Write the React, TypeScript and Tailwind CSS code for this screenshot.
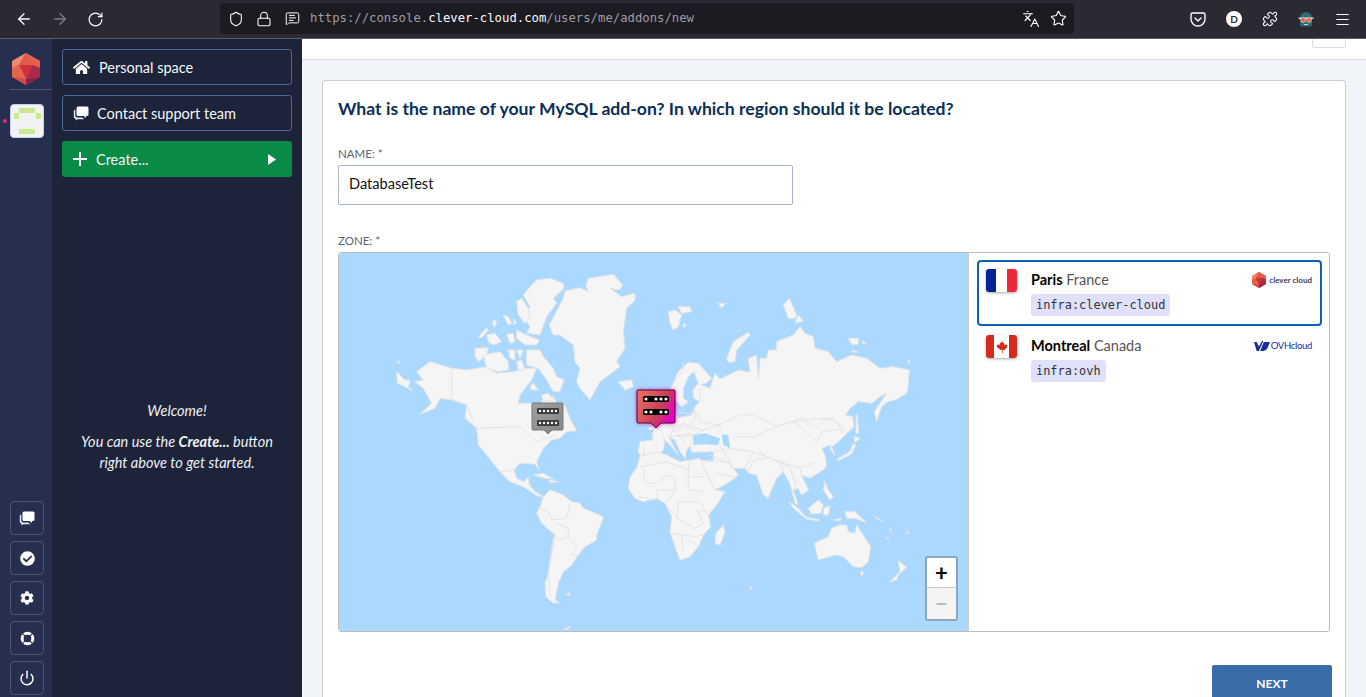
import { ArrowLeft, ArrowRight, Languages, Lock, Menu, MessageSquareText, Power, Puzzle, RotateCw, Shield, Star } from 'lucide-react'
import { FaCheckCircle, FaCog, FaHome } from 'react-icons/fa'

const sans = 'font-["Lato","Noto_Sans",sans-serif]'

// land shapes, traced at 3x from the origin of each group
const northLand = [
  '230,350 270,320 335,340 380,345 440,335 470,355 520,350 560,340 590,340 575,375 540,420 535,445 575,445 605,450 610,420 640,425 650,445 675,450 690,490 710,528 680,530 660,550 635,555 610,580 590,620 598,647 585,627 540,625 522,645 530,670 552,680 565,667 568,690 585,710 610,725 592,723 550,695 510,680 480,650 440,600 415,570 410,520 375,490 380,450 340,435 300,430 285,460 240,478 275,445 250,400 225,380 250,375',
  '170,350 195,375 210,375 205,395 218,408 195,395 172,385',
  '170,318 180,320 178,325',
  '590,75 630,70 670,85 672,100 640,130 650,145 620,185 600,240 560,235 570,215 555,190 570,155 550,120 575,90',
  '530,140 545,130 565,160 570,190 555,205 535,180',
  '490,180 505,185 515,205 505,210',
  '520,190 530,205 520,208',
  '460,195 470,200 465,215 458,212',
  '415,245 440,218 445,225 425,248',
  '440,240 465,235 485,260 460,270 445,260',
  '500,238 520,235 525,260 510,265',
  '530,225 560,240 598,255 590,270 555,270 530,250',
  '405,280 445,278 440,300 415,320 405,305',
  '430,300 480,290 505,320 505,345 475,350 440,340',
  '505,285 525,285 525,315 510,310',
  '530,285 550,285 540,310',
  '560,285 600,285 610,305 640,340 650,365 672,375 660,410 640,410 620,375 595,340 560,330',
  '530,320 545,315 555,345 535,345',
  '570,395 580,385 595,405 575,405',
  '605,420 625,415 640,435 610,440',
  // greenland
  '745,70 820,58 848,90 838,105 810,100 845,125 885,115 885,135 860,160 850,230 855,280 830,320 840,335 780,380 750,435 720,400 710,380 720,340 705,320 700,270 660,240 640,240 628,210 670,130 675,108 720,98 745,110 738,92',
  '835,380 875,375 880,395 855,405',
]

const eurasia = [
  '55,590 60,560 100,555 95,530 85,520 100,510 135,490 165,490 165,470 175,488 215,480 225,455 240,440 222,430 218,405 235,385 222,350 205,365 190,400 190,430 205,440 185,455 170,440 150,440 150,405 175,350 205,322 235,325 275,370 258,385 240,388 270,400 285,355 300,372 355,345 390,352 385,310 410,300 415,375 420,310 440,310 445,285 470,285 470,260 520,240 540,215 555,235 580,245 585,280 625,290 650,320 695,300 740,310 780,340 820,335 868,345 865,390 860,415 830,433 800,442 785,455 770,500 763,470 780,445 800,415 780,425 755,445 715,440 690,460 677,480 698,485 702,515 670,545 655,560 630,580 645,603 640,585 630,570 605,580 615,600 620,630 610,645 570,669 545,660 565,705 545,720 535,700 520,705 535,750 525,745 510,685 490,650 470,670 445,727 430,720 410,660 388,655 375,640 340,640 330,625 355,660 330,680 285,705 260,660 240,615 280,620 280,590 215,592 210,572 200,585 195,610 180,590 165,555 145,545 170,590 175,600 150,570 135,555 130,585 100,615 70,615',
  '340,260 385,232 390,240 350,285 345,320 325,322 320,310',
  '145,170 165,165 185,180 175,215 160,225 150,205',
  '175,155 210,155 215,170 185,175',
  '190,205 200,210 190,218',
  '295,145 318,145 305,160',
  '490,150 508,130 530,180 525,190 505,190',
  '525,205 535,180 550,198',
  '685,250 715,250 715,268 695,268',
  '725,258 740,265 728,266',
  '697,285 715,292 700,292',
  '862,320 868,315 868,325',
  '708,480 712,480 716,535 708,535',
  '702,545 720,550 705,563',
  '700,565 690,590 655,610 652,618 695,597 707,570',
  '60,480 80,470 90,505 60,505',
]

const seas = [
  '220,540 255,535 300,550 295,570 255,568 220,570',
  '305,538 325,540 330,580 310,570',
  '90,530 98,520 102,535',
]

const southLand = [
  // africa
  '390,110 410,85 420,50 470,35 500,45 540,65 570,60 600,55 620,100 645,150 675,155 650,195 625,225 632,260 610,285 595,320 570,350 540,360 525,320 510,275 515,230 495,190 470,175 430,185 405,175 385,145',
  '645,310 648,280 670,255 675,275 660,315',
  // south america
  '130,170 150,150 190,165 215,185 240,190 250,205 305,228 310,235 290,285 290,300 255,320 235,345 225,360 215,375 190,395 175,430 165,480 180,488 160,490 138,470 135,430 145,400 155,340 165,285 125,250 110,220 120,200',
  '100,105 130,100 160,118 135,115',
  '145,120 178,125 150,128',
  '198,463 212,460 205,468',
  '188,570 212,558 205,566',
  // south east asia
  '868,185 895,205 925,240 905,225 880,205',
  '915,230 960,240 950,243 915,235',
  '925,205 955,180 970,195 962,220 935,222',
  '970,205 990,198 985,225 970,225',
  '975,125 985,150 1000,170 990,180 970,150',
  '1000,240 1025,235 1020,242',
  '1035,215 1065,215 1100,248 1065,235 1040,235',
  // australia
  '943,310 985,290 995,265 1020,255 1040,255 1045,275 1065,280 1070,255 1112,320 1105,365 1085,383 1060,380 1030,350 1005,345 955,360',
  '1080,395 1090,395 1087,410',
  '1195,362 1220,382 1200,400',
  '1170,425 1200,395 1190,420',
  '1125,230 1150,245 1128,235',
  '1170,265 1175,275 1170,272',
  '1160,292 1168,298 1162,298',
  '1218,275 1228,278 1220,280',
  '750,440 758,448 752,448',
  '798,168 807,172 803,178',
]

const borders = {
  north: ['335,340 335,435 380,450 410,520 540,515 590,560 650,540', '480,650 520,645 522,645'],
  east: [
    '300,510 360,480 400,480 470,515 520,500 600,490 650,500 670,535',
    '340,545 400,545 470,515',
    '480,510 520,500 540,515 590,560 605,530 640,525 675,525',
    '520,500 540,490 590,518 610,490 640,490 675,525',
    '100,510 125,530 135,555',
    '135,490 160,520 205,510 225,495 225,455',
    '160,520 150,545',
    '205,510 250,525 220,540',
    '170,545 220,540 210,570',
    '250,525 300,510',
    '300,570 340,640',
    '280,590 330,580',
    '375,640 400,590 480,620 490,650',
    '400,590 330,580',
    '270,600 330,625',
    '480,620 540,640 545,660',
    '540,640 590,620',
    '70,570 75,612',
    '240,400 240,430 245,440',
    '190,320 190,345 150,400',
    '140,520 195,505 205,520 230,525',
    '170,470 200,475 235,475 240,500',
    '240,500 300,510 300,530',
    '145,545 185,540 215,535',
    '185,540 195,570',
    '155,530 185,525',
  ],
  south: [
    '420,80 500,65 565,90 570,60',
    '570,110 612,110',
    '565,90 565,150 610,155',
    '430,85 435,130 470,130 500,105 525,110 525,150 500,190',
    '470,150 530,150',
    '415,170 470,180 470,150',
    '530,185 600,185 620,220',
    '535,190 530,235 585,265 610,250 590,210 620,215',
    '510,280 545,285 550,330',
    '545,285 590,290 610,285',
    '565,300 600,320',
    '500,200 520,220',
    '145,215 155,240 200,235 210,190',
    '115,205 145,215',
    '165,250 205,265 205,290 230,320 215,345 235,345',
    '165,285 175,300 205,290',
    '160,290 145,400 150,470',
    '820,60 870,80 880,115 905,135',
    '880,115 890,150',
    '745,100 760,60 800,55 780,30',
    '625,60 670,65 690,70',
    '650,100 700,110',
  ],
}

function Land({ x, y, shapes, lines = [] }: { x: number; y: number; shapes: string[]; lines?: string[] }) {
  return (
    <g transform={`translate(${x} ${y}) scale(0.3333)`} fill="#f5f5f5" stroke="#e4e4e4" strokeWidth="3" strokeLinejoin="round">
      {shapes.map((p) => (
        <polygon key={p} points={p} />
      ))}
      {lines.map((p) => (
        <polyline key={p} points={p} fill="none" />
      ))}
    </g>
  )
}

function WorldMap() {
  return (
    <svg viewBox="339 253 629 378" className="h-full w-full">
      <defs>
        <linearGradient id="pin" x1="0" y1="0" x2="1" y2="0.5">
          <stop offset="0" stopColor="#ea7560" />
          <stop offset="0.68" stopColor="#c93f58" />
          <stop offset="1" stopColor="#e800c8" />
        </linearGradient>
        <linearGradient id="grayPin" x1="0" y1="0" x2="1" y2="1">
          <stop offset="0" stopColor="#a0a0a0" />
          <stop offset="1" stopColor="#868686" />
        </linearGradient>
        <filter id="glow" x="-30%" y="-30%" width="160%" height="160%">
          <feGaussianBlur stdDeviation="2" />
        </filter>
      </defs>
      <rect x="339" y="253" width="629" height="378" fill="#aad8ff" />
      <Land x={340} y={255} shapes={northLand} lines={borders.north} />
      <Land x={620} y={255} shapes={eurasia} lines={borders.east} />
      <g transform="translate(620 255) scale(0.3333)" fill="#aad8ff">
        {seas.map((p) => (
          <polygon key={p} points={p} />
        ))}
      </g>
      <Land x={500} y={440} shapes={southLand} lines={borders.south} />

      {/* gray pin */}
      <path d="M533 403h29a1 1 0 0 1 1 1v25a1 1 0 0 1-1 1h-10l-4 4-4-4h-11a1 1 0 0 1-1-1v-25a1 1 0 0 1 1-1z" fill="url(#grayPin)" stroke="#777" />
      <rect x="537" y="408" width="22" height="6" rx="1" fill="#3c3c3c" />
      <rect x="537" y="420" width="22" height="6" rx="1" fill="#3c3c3c" />
      {[540, 544, 548, 552, 556].map((c) => (
        <g key={c}>
          <circle cx={c} cy="411" r="1.200" fill="#fff" />
          <circle cx={c} cy="423" r="1.200" fill="#fff" />
        </g>
      ))}

      {/* selected pin */}
      <path d="M638 390h36a1 1 0 0 1 1 1v31a1 1 0 0 1-1 1h-13l-5 5-5-5h-13a1 1 0 0 1-1-1v-31a1 1 0 0 1 1-1z" fill="#e000d0" filter="url(#glow)" />
      <path d="M638 390h36a1 1 0 0 1 1 1v31a1 1 0 0 1-1 1h-13l-5 5-5-5h-13a1 1 0 0 1-1-1v-31a1 1 0 0 1 1-1z" fill="url(#pin)" stroke="#4c1024" />
      <rect x="643" y="396" width="26" height="6" rx="1.500" fill="#000" />
      <rect x="643" y="409" width="26" height="6" rx="1.500" fill="#000" />
      {[646, 656, 661, 666].map((c) => (
        <circle key={c} cx={c} cy="399" r="1.600" fill="#fff" />
      ))}
      {[646, 651, 661, 666].map((c) => (
        <circle key={c} cx={c} cy="412" r="1.600" fill="#fff" />
      ))}
    </svg>
  )
}

function ChatIcon({ size = 16 }: { size?: number }) {
  return (
    <svg viewBox="0 0 16 16" width={size} height={size} fill="#fff">
      <path d="M5 1.500h9a1.500 1.500 0 0 1 1.500 1.500v6.500A1.500 1.500 0 0 1 14 11h-1v2l-2.500-2H5A1.500 1.500 0 0 1 3.500 9.500V3A1.500 1.500 0 0 1 5 1.500z" />
      <path d="M2.300 4.500v6A2 2 0 0 0 4.300 12.500h5l2 1.800H4.500l-2 1v-1.500A2.300 2.300 0 0 1 .8 11.500V6a1.800 1.800 0 0 1 1.500-1.500z" fill="#dbe6ff" />
    </svg>
  )
}

function LifeRing() {
  return (
    <svg viewBox="0 0 16 16" width="15" height="15" fill="none">
      <circle cx="8" cy="8" r="5.700" stroke="#fff" strokeWidth="3.200" />
      <path d="M2.300 2.300l3.400 3.400M13.700 2.300l-3.400 3.400M2.300 13.700l3.400-3.400M13.700 13.700l-3.400-3.400" stroke="#262f50" strokeWidth="1.200" />
    </svg>
  )
}

function CleverLogo({ size }: { size: number }) {
  return (
    <svg viewBox="0 0 28 32" width={size * 0.875} height={size}>
      <polygon points="14,0 28,8 28,24 14,32 0,24 0,8" fill="#d9483f" />
      <polygon points="14,0 0,8 0,15 7,12" fill="#ee8a6e" />
      <polygon points="14,0 28,8 28,15 21,12" fill="#e8614f" />
      <polygon points="14,0 7,12 21,12" fill="#e25a4b" />
      <polygon points="7,12 21,12 14,26" fill="#cf3238" />
      <polygon points="0,15 7,12 14,26 0,24" fill="#e5654f" />
      <polygon points="28,15 21,12 14,26 28,24" fill="#a92a49" />
      <polygon points="14,26 28,24 14,32" fill="#8a2048" />
      <polygon points="14,26 0,24 14,32" fill="#d24a48" />
    </svg>
  )
}

function RailButton({ children }: { children: React.ReactNode }) {
  return (
    <div className="flex h-[34px] w-[34px] items-center justify-center rounded border border-[#4d5671] text-white">{children}</div>
  )
}

function PanelLink({ icon, label, gap }: { icon: React.ReactNode; label: string; gap: string }) {
  return (
    <div className={`flex h-9 items-center rounded-[3px] border border-[#4b6a92] pl-[10px] text-[14.5px] text-[#f4f6fa] ${gap}`}>
      {icon}
      <span className="pt-[1px]">{label}</span>
    </div>
  )
}

function Browser() {
  return (
    <div className="flex h-[39px] shrink-0 items-center border-b border-[#5c5b66] bg-[#2b2a33] text-[#fbfbfe]">
      <div className="flex w-[220px] items-center pl-[15px]">
        <ArrowLeft size={18} strokeWidth={1.7} />
        <ArrowRight size={18} strokeWidth={1.7} className="ml-[18px] text-[#7d7c84]" />
        <RotateCw size={17} strokeWidth={1.7} className="ml-[18px]" />
      </div>
      <div className="mb-[1px] flex h-[31px] w-[854px] items-center rounded bg-[#1c1b22] pl-[8px]">
        <Shield size={16} strokeWidth={1.6} />
        <Lock size={16} strokeWidth={1.6} className="ml-[12px]" />
        <MessageSquareText size={15} strokeWidth={1.6} className="ml-[13px]" />
        <span className='ml-[10px] font-["DejaVu_Sans_Mono",monospace] text-[12.27px] text-[#9d9da3]'>
          https://console.<span className="text-[#fbfbfe]">clever-cloud.com</span>/users/me/addons/new
        </span>
        <Languages size={18} strokeWidth={1.5} className="ml-auto" />
        <Star size={17} strokeWidth={1.6} className="ml-[10px] mr-[7px]" />
      </div>
      <div className="flex flex-1 items-center">
        <svg viewBox="0 0 16 16" width="16" height="16" fill="none" stroke="#fbfbfe" strokeWidth="1.400" className="ml-[116px]">
          <path d="M2.500 2h11a1.500 1.500 0 0 1 1.500 1.500V8a7 7 0 0 1-14 0V3.500A1.500 1.500 0 0 1 2.500 2z" />
          <path d="M5 7l3 3 3-3" strokeLinecap="round" />
        </svg>
        <span className={`ml-[20px] flex h-4 w-4 items-center justify-center rounded-full bg-white text-[10px] font-bold text-[#2b2a33] ${sans}`}>D</span>
        <Puzzle size={16} strokeWidth={1.6} className="ml-[20px]" />
        <svg viewBox="0 0 16 16" width="16" height="16" className="ml-[20px]">
          <path d="M2 7a6 6 0 0 1 12 0v6a2.500 2.500 0 0 1-2.500 2.500h-7A2.500 2.500 0 0 1 2 13z" fill="#2f6a77" />
          <rect x="0.500" y="6.500" width="15" height="1.500" fill="#c9d3d6" />
          <circle cx="5" cy="9" r="2.400" fill="#e8643c" stroke="#e5e5e5" strokeWidth="0.600" />
          <circle cx="11" cy="9" r="2.400" fill="#e8643c" stroke="#e5e5e5" strokeWidth="0.600" />
          <rect x="6" y="13" width="4" height="1" fill="#c9d3d6" />
        </svg>
        <Menu size={17} strokeWidth={1.6} className="ml-[20px]" />
      </div>
    </div>
  )
}

function Rail() {
  return (
    <aside className="relative flex h-full w-[52px] shrink-0 flex-col bg-[#262f50]">
      <div className="ml-[12px] mt-[14px]">
        <CleverLogo size={32} />
      </div>
      <div className="ml-[10px] mt-[4px] h-px bg-[#4d5671]" />
      <div className="ml-[10px] mt-[14px] flex h-[34px] w-[34px] flex-col items-center rounded border border-[#c4d2e8] bg-[#f2f2f2] pt-[3px]">
        <div className="h-[5px] w-[16px] shrink-0 bg-[#c9e88f]" />
        <div className="flex h-[6px] w-[27px] shrink-0 justify-between">
          <div className="h-[6px] w-[5px] bg-[#c9e88f]" />
          <div className="h-[6px] w-[5px] bg-[#c9e88f]" />
        </div>
        <div className="mt-[10px] h-[5px] w-[16px] shrink-0 bg-[#c9e88f]" />
      </div>
      <div className="absolute left-[3px] top-[80px] h-[4px] w-[4px] rounded-full bg-[#f0247e]" />
      <div className="ml-[10px] mt-auto flex flex-col gap-[6px] pb-[2px]">
        <RailButton>
          <ChatIcon />
        </RailButton>
        <RailButton>
          <FaCheckCircle size={15} />
        </RailButton>
        <RailButton>
          <FaCog size={14} />
        </RailButton>
        <RailButton>
          <LifeRing />
        </RailButton>
        <RailButton>
          <Power size={16} strokeWidth={2.200} />
        </RailButton>
      </div>
    </aside>
  )
}

function Panel() {
  return (
    <aside className="flex h-full w-[250px] shrink-0 flex-col bg-[#1d2338] px-[10px] pt-[10px]">
      <div className="flex flex-col gap-[10px]">
        <PanelLink gap="gap-[9px]" icon={<FaHome size={17} color="#fff" />} label="Personal space" />
        <PanelLink gap="gap-[8px]" icon={<ChatIcon />} label="Contact support team" />
        <div className="flex h-9 items-center rounded-[3px] bg-[#0a8a47] pl-[11px] pr-[16px] text-[14.5px] text-[#f4f6fa]">
          <svg viewBox="0 0 14 14" width="14" height="14" stroke="#fff" strokeWidth="2">
            <path d="M7 0v14M0 7h14" />
          </svg>
          <span className="ml-[9px] pt-[1px]">Create...</span>
          <svg viewBox="0 0 8 11" width="8" height="11" fill="#fff" className="ml-auto">
            <path d="M0 0l8 5.500-8 5.500z" />
          </svg>
        </div>
      </div>
      <div className="mt-[223px] text-center text-[14.5px] italic leading-[21px] text-[#eef1f6]">
        <p>Welcome!</p>
        <p className="mt-[10px]">
          You can use the <span className="font-bold">Create...</span> button
          <br />
          right above to get started.
        </p>
      </div>
    </aside>
  )
}

function Zone({
  city,
  country,
  infra,
  selected,
  flag,
  logo,
}: {
  city: string
  country: string
  infra: string
  selected?: boolean
  flag: React.ReactNode
  logo: React.ReactNode
}) {
  return (
    <div className={`flex h-[66px] rounded-[4px] border-2 pl-[7px] pr-[8px] pt-[7px] ${selected ? 'border-[#0b62b4]' : 'border-transparent'}`}>
      <div className="h-[23px] w-[31px] shrink-0 overflow-hidden rounded-[3px] shadow-[0_1px_3px_rgba(0,0,0,0.35)]">{flag}</div>
      <div className="ml-[14px]">
        <p className="text-[14.5px] leading-[22px] text-[#555]">
          <b className="font-bold text-black">{city}</b> {country}
        </p>
        <span className='mt-[3px] inline-block rounded-[3px] bg-[#e0e0fb] px-[5px] font-["DejaVu_Sans_Mono",monospace] text-[11.95px] leading-[22px] text-[#333]'>
          {infra}
        </span>
      </div>
      <div className="ml-auto mt-[3px] flex h-[16px] items-center">{logo}</div>
    </div>
  )
}

function Form() {
  return (
    <section className="mx-[20px] mt-[20px] flex-1 rounded-t border border-b-0 border-[#ccc] bg-white px-[15px] pt-[16px]">
      <h2 className="text-[17.6px] font-bold leading-[23px] text-[#0a2f57]">What is the name of your MySQL add-on? In which region should it be located?</h2>
      <label className="mt-[26px] block text-[11.5px] leading-[16px] text-[#5b6472]">NAME: *</label>
      <div className="mt-[3px] flex h-[40px] w-[455px] items-center rounded-[2px] border border-[#a6b3cd] px-[10px] pb-[2px] text-[14.6px] text-[#111]">DatabaseTest</div>
      <label className="mt-[28px] block text-[11.5px] leading-[16px] text-[#5b6472]">ZONE: *</label>
      <div className="mt-[3px] flex h-[380px] w-[992px] overflow-hidden rounded-[3px] border border-[#bdbdbd]">
        <div className="relative h-full w-[630px] shrink-0 border-r border-[#ccc]">
          <WorldMap />
          <div className="absolute left-[586px] top-[303px] w-[33px] overflow-hidden rounded-[3px] border-2 border-[#8ea6bb]">
            <div className="flex h-[30px] items-center justify-center border-b border-[#c9c9c9] bg-white text-[22px] font-bold leading-none text-black">+</div>
            <div className="flex h-[31px] items-center justify-center bg-[#f4f4f4] text-[22px] font-bold leading-none text-[#bbb]">−</div>
          </div>
        </div>
        <div className="flex-1 p-[7px] pl-[8px]">
          <Zone
            selected
            city="Paris"
            country="France"
            infra="infra:clever-cloud"
            flag={
              <div className="flex h-full">
                <div className="flex-1 bg-[#002395]" />
                <div className="flex-1 bg-white" />
                <div className="flex-1 bg-[#ed2939]" />
              </div>
            }
            logo={
              <span className="flex items-center gap-[3px]">
                <CleverLogo size={16} />
                <span className="text-[8px] font-bold text-[#3b3a63]">clever cloud</span>
              </span>
            }
          />
          <Zone
            city="Montreal"
            country="Canada"
            infra="infra:ovh"
            flag={
              <div className="flex h-full">
                <div className="w-[8px] bg-[#d52b1e]" />
                <div className="flex flex-1 items-center justify-center bg-white">
                  <svg viewBox="0 0 14 14" width="12" height="12" fill="#d52b1e">
                    <path d="M7 0l1.500 2.500 1.200-.6-.5 3.300 1.700-1.700.4 1.200 2-.3-.6 2.100.8.500-2.900 2.400.3 1.100-3-.4V14h-.8v-3.900l-3 .4.300-1.100L.5 7l.8-.5-.6-2.100 2 .3.400-1.200 1.700 1.700-.5-3.300 1.200.6z" />
                  </svg>
                </div>
                <div className="w-[8px] bg-[#d52b1e]" />
              </div>
            }
            logo={
              <span className="flex items-center gap-[1px]">
                <svg viewBox="0 0 18 11" width="16" height="10" fill="#1a2d9c">
                  <path d="M0 1h3l2.500 5L9 0h1.500L5.500 11H3zM11 1h7l-2.500 6c-.8 2.500-2.500 4-5 4H7z" />
                </svg>
                <span className="text-[9.5px] tracking-[-0.3px] text-[#1a2d9c]">OVHcloud</span>
              </span>
            }
          />
        </div>
      </div>
      <div className="mr-[-2px] mt-[33px] flex justify-end">
        <div className="flex h-[40px] w-[120px] items-start justify-center rounded-[2px] bg-[#3a6ca8] pt-[10px] text-[12px] font-bold text-white">NEXT</div>
      </div>
    </section>
  )
}

export default function App() {
  return (
    <div className={`flex h-[697px] flex-col overflow-hidden ${sans}`}>
      <Browser />
      <div className="flex min-h-0 flex-1">
        <Rail />
        <Panel />
        <main className="flex min-w-0 flex-1 flex-col bg-[#f1f4f9]">
          <div className="flex h-[21px] shrink-0 justify-end border-b border-[#dcdcdc] bg-white pr-[20px]">
            <div className="h-[9px] w-[34px] rounded-b-[2px] border border-t-0 border-[#ddd]" />
          </div>
          <Form />
        </main>
      </div>
    </div>
  )
}
